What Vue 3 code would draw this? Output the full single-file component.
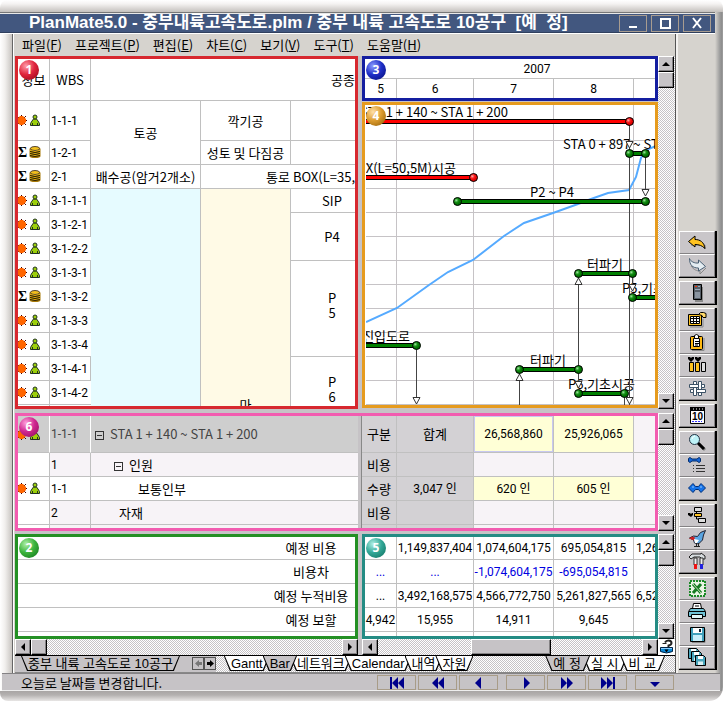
<script setup>
const menus = [
  ['파일', 'F'], ['프로젝트', 'P'], ['편집', 'E'], ['차트', 'C'],
  ['보기', 'V'], ['도구', 'T'], ['도움말', 'H'],
]

const person = '<path d="M15.500 5h3l1.500 2 1.500 2.500v2h-9v-2L14 7z" fill="#9ccf0a" stroke="#232"/><path d="M14.500 9v2M19.500 9v2" stroke="#232"/><circle cx="17" cy="3" r="2" fill="#9ccf0a" stroke="#232"/>'
const rowIcons = {
  work: '<path d="M-1 2 8 11M8 2-1 11M3.500 1v11M-3 6.500H9" stroke="#400"/><path d="M2 2h3l3 3v3l-3 3H2L-1 8V5z" fill="#f60"/>' + person,
  sum: '<text x="0" y="11" font-family="Liberation Serif, serif" font-size="14" font-weight="700">Σ</text><path d="M11.500 3q0-2 5.500-2t5.500 2v7q0 2-5.500 2t-5.500-2z" fill="#a87a08"/><ellipse cx="17" cy="2.500" rx="4.500" ry="2" fill="#f2c01c" stroke="#543"/><path d="M12 4.500q5 2 10 0M12 6.500q5 2 10 0M12 8.500q5 2 10 0" fill="none" stroke="#e8b818"/><path d="M12 5.500q5 2 10 0M12 7.500q5 2 10 0M12 9.500q5 2 10 0" fill="none" stroke="#2a2000"/>',
}

const wbsRows = [
  ['work', '1-1-1'], ['sum', '1-2-1'], ['sum', '2-1'],
  ['work', '3-1-1-1'], ['work', '3-1-2-1'], ['work', '3-1-2-2'],
  ['work', '3-1-3-1'], ['sum', '3-1-3-2'], ['work', '3-1-3-3'],
  ['work', '3-1-3-4'], ['work', '3-1-4-1'], ['work', '3-1-4-2'], ['work', '3-1-4-3'],
]
const pierCells = {
  3: { span: 1, lines: ['SIP'] },
  4: { span: 2, lines: ['P4'] },
  6: { span: 4, lines: ['P', '5'] },
  10: { span: 3, lines: ['P', '6'] },
}

const gridX = [30, 107, 187, 267]
const gridY = [35, 59, 83, 107, 131, 155, 179, 203, 227, 251, 275, 299]
const bars = [
  { x1: -10, x2: 263, y: 16, color: '#ff0000' },
  { x1: -10, x2: 107, y: 72, color: '#ff0000' },
  { x1: 91, x2: 279, y: 96, color: '#008000' },
  { x1: 263, x2: 279, y: 48, color: '#008000' },
  { x1: 212, x2: 266, y: 168, color: '#008000' },
  { x1: 266, x2: 400, y: 192, color: '#008000' },
  { x1: -10, x2: 50, y: 240, color: '#008000' },
  { x1: 153, x2: 212, y: 264, color: '#008000' },
  { x1: 212, x2: 258, y: 288, color: '#008000' },
]
const nodes = bars.flatMap((b) => [
  { x: b.x1, y: b.y, red: b.color === '#ff0000' },
  { x: b.x2, y: b.y, red: b.color === '#ff0000' },
])
const links = [
  [263, 16, 300], [279, 48, 90], [266, 168, 186], [50, 240, 299],
  [153, 264, 301], [212, 168, 264], [212, 264, 282], [258, 288, 301],
]
const downArrows = [[263, 43], [263, 299], [279, 91], [266, 186], [50, 299], [212, 283]]
const upArrows = [[212, 173], [153, 269]]
const labels = [
  { x: 142, y: 12, at: 'end', t: 'STA 1 + 140 ~ STA 1 + 200' },
  { x: 197, y: 44, at: 'start', t: 'STA 0 + 897 ~ STA 1 + 140' },
  { x: 90, y: 68, at: 'end', t: '통로 BOX(L=50,5M)시공' },
  { x: 186, y: 92, at: 'middle', t: 'P2 ~ P4' },
  { x: 239, y: 164, at: 'middle', t: '터파기' },
  { x: 256, y: 188, at: 'start', t: 'P5,기초시공' },
  { x: 44, y: 236, at: 'end', t: '진입도로' },
  { x: 182, y: 260, at: 'middle', t: '터파기' },
  { x: 202, y: 284, at: 'start', t: 'P6,기초시공' },
]

const costLabels = ['예정 비용', '비용차', '예정 누적비용', '예정 보할', '']
const costRows = [
  ['', '1,149,837,404', '1,074,604,175', '695,054,815', '1,263'],
  ['...', '...', '-1,074,604,175', '-695,054,815', ''],
  ['...', '3,492,168,575', '4,566,772,750', '5,261,827,565', '6,525'],
  ['4,942', '15,955', '14,911', '9,645', ''],
  ['', '', '', '', ''],
]

const viewTabs = ['Gantt', 'Bar', '네트워크', 'Calendar', '내역', '자원']
const planTabs = ['예 정', '실 시', '비 교']

const floppy = (x, y) => `<g transform="translate(${x} ${y})"><path d="M0.500.500h8l2 2v8H.500z" fill="#4aa6bd" stroke="#000"/><path d="M3 1h5v3H3z" fill="#fff"/><path d="M3 6.500h5V10H3z" fill="#d8f0f4"/></g>`
const tools = [
  [
    ['되돌리기', '<path d="M4 12h14v4" stroke="#888" fill="none"/><path d="M1.500 8.500 8 3v3.500c5 0 9 2.500 10 9-3-3-6-4-10-4V14z" fill="#ffc321" stroke="#000"/>'],
    ['다시하기', '<path d="M4 10c3 4 6 5 9 5v3l6-6" stroke="#888" fill="none"/><path d="M2.500 2.500c1 3 5 5 9 4.500V4l7 6.500-7 4.500v-3c-6 0-9-3-9-9.500z" fill="#e4edf2" stroke="#4a6074"/>'],
  ],
  [['계산기', '<path d="M8 18h7V4" stroke="#888" stroke-width="2" fill="none"/><path d="M6.500 1.500h8v15h-8z" fill="#555d66" stroke="#000"/><path d="M8 3h2v1H8z" fill="#f30"/><path d="M11 3h2v1h-2zM8 6h5v1H8z" fill="#9ab"/><path d="M8 9h5v6H8z" fill="#8a94a0"/>']],
  [
    ['달력표', '<path d="M3 17h13V9" fill="none" stroke="#888"/><path d="M1.500 4.500h13v11h-13z" fill="#ffc321" stroke="#000"/><path d="M3.500 6.500h9v7h-9z" fill="#fff" stroke="#000"/><path d="M6.500 6v8M9.500 6v8M4 8.500h9M4 11.500h9" stroke="#000"/><path d="M11.500 4.500l2-2h3l2.500 1v4h-3l-1-2z" fill="#ffd867" stroke="#000"/>'],
    ['클립보드', '<path d="M5 17.500h12V5" fill="none" stroke="#888"/><rect x="3.500" y="3.500" width="12" height="13" rx="1" fill="#ffb911" stroke="#000"/><path d="M6.500 5.500h6v8h-6z" fill="#fff" stroke="#000"/><path d="M8 8.500h4M8 10.500h4M8 12h3" stroke="#000"/><path d="M7.500 2.500l2-1 2 1v3h-4z" fill="#fff" stroke="#000"/>'],
    ['자원', '<path d="M1 1h2l1 1 1-1h2v2L4 6 1 3zM8 1h2l1 1 1-1h2v2l-3 3-3-3z" fill="#000"/><path d="M2.500 6.500h4v9h-4zM8.500 6.500h4v9h-4z" fill="#ffc321" stroke="#000"/><path d="M14.500 6.500h4v9h-4z" fill="#ddd" stroke="#000"/>'],
    ['연결망', '<g fill="#fff" stroke="#3c5266"><path d="M6.500 2.500h3v14h-3zM11.500 2.500h3v14h-3z"/><path d="M2.500 5.500h9v3h-9zM9.500 10.500h9v3h-9z"/><path d="M14.500 5.500h3v3h-3zM3.500 10.500h3v3h-3z"/></g>'],
  ],
  [['오늘', '<path d="M3.500 1.500h14v16h-14z" fill="#fff" stroke="#000"/><path d="M3 1h15v4H3z" fill="#000"/><path d="M6 3h1M9 3h1M12 3h1M15 3h1" stroke="#fff"/><text x="10.500" y="14" text-anchor="middle" font-family="Liberation Sans" font-size="10" font-weight="700">10</text><path d="M5 15.500h10" stroke="#33f" stroke-dasharray="2 1"/>']],
  [
    ['찾기', '<path d="M12 11l6 6" stroke="#888" stroke-width="3"/><path d="M11 10l6 6" stroke="#000" stroke-width="3"/><circle cx="7.500" cy="6.500" r="5" fill="#bdf2f7" stroke="#234"/><path d="M5 6q1-3 3-3" stroke="#fff" fill="none"/>'],
    ['작업 목록', '<path d="M1.500 2.500l1.500-1 2 1.500h5l2-1.500 1.500 1v3L12 6.500 10 5H5L3 6.500 1.500 5.500z" fill="#1667d8" stroke="#002a6b"/><path d="M6 9.500h1M9 9.500h9M6 12.500h1M9 12.500h9M6 15.500h1M9 15.500h9" stroke="#333"/>'],
    ['관계', '<path d="M1.500 9 6 4.500 8.500 7.500h3L14 4.500 18.500 9 14 13.500 11.500 10.500h-3L6 13.500z" fill="#1673e8" stroke="#002f7a"/><path d="M5 8h2M13 8h2" stroke="#9cf"/>'],
  ],
  [
    ['조직도', '<path d="M9.500 4v9h4M9 8h1" stroke="#000" fill="none"/><path d="M7.500 1.500h7v4h-7z" fill="#ddd" stroke="#000"/><path d="M7.500 7.500h7v3h-7z" fill="#ffc321" stroke="#000"/><path d="M11.500 12.500h7v4h-7z" fill="#ddd" stroke="#000"/><path d="M1 7h2l1 1 1-1h1v2l-2 2-3-2z"/>'],
    ['새 작업', '<path d="M18.500 1.500l-5 2-3 4-4-.5-4 2 4 2 1 3 4 1 4-4 1-5z" fill="#5aa5e2" stroke="#223"/><path d="M2 9.500l3-2 3 1-1 3z" fill="#c22"/><path d="M7 10l5 1-2 3H8z" fill="#fff"/><path d="M9.500 14v3M11.500 14v3M7 17.500h6" stroke="#222"/>'],
    ['도구', '<path d="M2 5l3-3h9v-1l4 3v3h-3l-2-2H7L4 7z" fill="#d8dde0" stroke="#222"/><path d="M7 6h3v7H7zM13 6h3v7h-3z" fill="#eee" stroke="#333"/><path d="M7 12h3v5H7z" fill="#e11"/><path d="M13 12h3v5h-3z" fill="#22d"/>'],
  ],
  [
    ['엑셀', '<path d="M3 2h15v15H3z" fill="#e9f5e4" stroke="#1a8a26" stroke-width="2" stroke-dasharray="2 1"/><path d="M6 5l8 9M14 5l-8 9" stroke="#167a22" stroke-width="3"/><path d="M6 5l8 9" stroke="#bfe3b4"/>'],
    ['인쇄', '<path d="M6.500 1.500h7l1 5h-9z" fill="#fff" stroke="#000"/><path d="M8 4h4" stroke="#000"/><path d="M3.500 6.500h13l2 3v5h-17v-5z" fill="#6fc3d6" stroke="#000"/><path d="M2 9.500h16" stroke="#000"/><path d="M4.500 12.500h11v4h-11z" fill="#dff6f8" stroke="#000"/>'],
    ['저장', '<path d="M5 17.500h13V4" fill="none" stroke="#888"/><path d="M3.500 2.500h14v14h-14z" fill="#41a0bb" stroke="#000"/><path d="M6 3h9v5H6z" fill="#fff"/><path d="M12 4h2v3h-2z" fill="#123"/><path d="M6 10h9v6H6z" fill="#c9effa"/>'],
    ['모두 저장', floppy(1, 0) + floppy(4, 3) + floppy(8, 7)],
  ],
]

const navGroups = [
  [
    ['처음', '<path d="M3 1h2v12H3zM11 1v12L5 7zM17 1v12l-6-6z"/>'],
    ['이전 쪽', '<path d="M10 1v12L4 7zM16 1v12l-6-6z"/>'],
    ['이전', '<path d="M12 1v12L6 7z"/>'],
  ],
  [
    ['다음', '<path d="M8 1v12l6-6z"/>'],
    ['다음 쪽', '<path d="M4 1v12l6-6zM10 1v12l6-6z"/>'],
    ['마지막', '<path d="M3 1v12l6-6zM9 1v12l6-6zM15 1h2v12h-2z"/>'],
  ],
  [['메뉴', '<path d="M5 6h10l-5 5z"/>']],
]
</script>

<template>
  <div class="window">
    <header class="titlebar">
      <h1>PlanMate5.0 - 중부내륙고속도로.plm / 중부 내륙 고속도로 10공구&nbsp; [예&nbsp; 정]</h1>
      <div class="winbtns">
        <button type="button" aria-label="최소화"><svg width="14" height="14"><path d="M3 10h8v2H3z" fill="#fff" /></svg></button>
        <button type="button" aria-label="최대화"><svg width="14" height="14"><path d="M3 3h9v9H3z" fill="none" stroke="#fff" stroke-width="2" /></svg></button>
        <button type="button" aria-label="닫기"><svg width="14" height="14"><path d="M3 2l8 10M11 2 3 12" stroke="#fff" stroke-width="2" /></svg></button>
      </div>
    </header>

    <div class="middle">
      <main class="client">
        <nav class="menubar">
          <button v-for="m in menus" :key="m[1]" type="button">{{ m[0] }}(<u>{{ m[1] }}</u>)</button>
        </nav>

        <div class="workspace">
          <section class="pane red wbs">
            <span class="badge b-red">1</span>
            <table>
              <colgroup><col class="c-info"><col class="c-wbs"><col class="c-kind"><col class="c-sub"><col></colgroup>
              <thead>
                <tr class="r-head"><th>정보</th><th>WBS</th><th colspan="3" class="right">공종</th></tr>
              </thead>
              <tbody>
                <tr v-for="(r, i) in wbsRows" :key="r[1]" :class="{ tall: i === 0 }">
                  <td class="ico"><svg width="24" height="13" v-html="rowIcons[r[0]]"></svg></td>
                  <td class="code">{{ r[1] }}</td>
                  <td v-if="i === 0" rowspan="2">토공</td>
                  <td v-if="i === 0">깍기공</td>
                  <td v-if="i === 0"></td>
                  <td v-if="i === 1">성토 및 다짐공</td>
                  <td v-if="i === 1"></td>
                  <td v-if="i === 2">배수공(암거2개소)</td>
                  <td v-if="i === 2" colspan="2" class="right">통로 BOX(L=35,</td>
                  <td v-if="i === 3" rowspan="10" class="blue"></td>
                  <td v-if="i === 3" rowspan="10" class="cream">마</td>
                  <td v-if="pierCells[i]" :rowspan="pierCells[i].span" class="pier" :class="{ stacked: pierCells[i].lines.length > 1 }">
                    <div v-for="l in pierCells[i].lines" :key="l">{{ l }}</div>
                  </td>
                </tr>
              </tbody>
            </table>
          </section>

          <div class="chartcol">
            <section class="pane navy calendar">
              <span class="badge b-navy">3</span>
              <table>
                <colgroup><col class="c-a"><col class="c-b"><col class="c-c"><col class="c-c"><col></colgroup>
                <tbody>
                  <tr><th colspan="5" class="year">2007</th></tr>
                  <tr><th>5</th><th>6</th><th>7</th><th>8</th><th></th></tr>
                </tbody>
              </table>
            </section>
            <section class="pane orange chart">
              <span class="badge b-orange">4</span>
              <svg class="plot" width="100%" height="100%">
                <defs>
                  <radialGradient id="ball-red" cx="35%" cy="35%"><stop offset="0" stop-color="#ffb0b0" /><stop offset=".5" stop-color="#ff2020" /><stop offset="1" stop-color="#e00000" /></radialGradient>
                  <radialGradient id="ball-green" cx="35%" cy="35%"><stop offset="0" stop-color="#a0e8a0" /><stop offset=".5" stop-color="#189018" /><stop offset="1" stop-color="#007000" /></radialGradient>
                </defs>
                <g fill="#c6c3c6">
                  <rect v-for="x in gridX" :key="'x' + x" :x="x" y="0" width="1" height="100%" />
                  <rect v-for="y in gridY" :key="'y' + y" x="0" :y="y" width="100%" height="1" />
                </g>
                <polyline points="0,217 31,203 63,180 82,167 107,155 138,131 158,118 187,108 212,99 225,94 242,88 263,85 270,72 275,53 280,45 290,41" fill="none" stroke="#55aaff" stroke-width="2" />
                <text v-for="(l, i) in labels" :key="i" :x="l.x" :y="l.y" :text-anchor="l.at">{{ l.t }}</text>
                <g stroke="#444" fill="none">
                  <path v-for="(l, i) in links" :key="i" :d="`M${l[0] + 0.5} ${l[1]}V${l[2]}`" />
                </g>
                <g v-for="(b, i) in bars" :key="i">
                  <rect :x="b.x1" :y="b.y - 2" :width="b.x2 - b.x1" height="5" />
                  <rect :x="b.x1" :y="b.y - 1" :width="b.x2 - b.x1" height="3" :fill="b.color" />
                </g>
                <circle v-for="(n, i) in nodes" :key="i" :cx="n.x + 0.5" :cy="n.y + 0.5" r="4" :fill="n.red ? 'url(#ball-red)' : 'url(#ball-green)'" stroke="#000" />
                <g stroke="#333" fill="#fff">
                  <path v-for="(a, i) in downArrows" :key="'d' + i" :d="`M${a[0] - 3} ${a[1] - 6.5}h7l-3.500 6.500z`" />
                  <path v-for="(a, i) in upArrows" :key="'u' + i" :d="`M${a[0] - 3} ${a[1] + 6.5}h7l-3.500-6.500z`" />
                </g>
              </svg>
            </section>
          </div>
          <div class="vscroll">
            <button type="button" aria-label="위로"><i class="up"></i></button><span class="thumb"></span><button type="button" class="last" aria-label="아래로"><i class="down"></i></button>
          </div>

          <section class="pane pink detail">
            <span class="badge b-pink">6</span>
            <table class="d-left">
              <colgroup><col class="c-info"><col class="c-wbs"><col></colgroup>
              <tbody>
                <tr class="sel">
                  <td class="ico"><svg width="24" height="13" v-html="rowIcons.work"></svg></td><td class="code">1-1-1</td>
                  <td class="name n1"><span class="box"></span>STA 1 + 140 ~ STA 1 + 200</td>
                </tr>
                <tr><td></td><td class="code tint">1</td><td class="name n2 tint"><span class="box"></span>인원</td></tr>
                <tr>
                  <td class="ico"><svg width="24" height="13" v-html="rowIcons.work"></svg></td><td class="code">1-1</td>
                  <td class="name n3">보통인부</td>
                </tr>
                <tr><td></td><td class="code tint">2</td><td class="name n4 tint">자재</td></tr>
                <tr><td></td><td class="tint"></td><td class="tint"></td></tr>
              </tbody>
            </table>
            <div class="d-split"></div>
            <table class="d-right">
              <colgroup><col class="c-d"><col class="c-b"><col class="c-c"><col class="c-c"><col></colgroup>
              <tbody>
                <tr class="first"><th>구분</th><th>합계</th><td class="val cur">26,568,860</td><td class="val">25,926,065</td><td class="tint"></td></tr>
                <tr><th>비용</th><th></th><td class="tint"></td><td class="tint"></td><td class="tint"></td></tr>
                <tr><th>수량</th><th class="num">3,047 인</th><td class="val">620 인</td><td class="val">605 인</td><td></td></tr>
                <tr><th>비용</th><th></th><td class="tint"></td><td class="tint"></td><td class="tint"></td></tr>
                <tr><th></th><th></th><td class="tint"></td><td class="tint"></td><td class="tint"></td></tr>
              </tbody>
            </table>
          </section>
          <div class="vscroll">
            <button type="button" aria-label="위로"><i class="up"></i></button><span class="thumb"></span><button type="button" class="last" aria-label="아래로"><i class="down"></i></button>
          </div>

          <section class="pane green costs">
            <span class="badge b-green">2</span>
            <table>
              <tbody>
                <tr v-for="(c, i) in costLabels" :key="i"><th>{{ c }}</th></tr>
              </tbody>
            </table>
          </section>
          <section class="pane teal values">
            <span class="badge b-teal">5</span>
            <table>
              <colgroup><col class="c-a"><col class="c-b"><col class="c-c"><col class="c-c"><col></colgroup>
              <tbody>
                <tr v-for="(r, i) in costRows" :key="i" :class="{ minus: i === 1 }"><td v-for="(v, j) in r" :key="j"><div>{{ v }}</div></td></tr>
              </tbody>
            </table>
          </section>
          <div class="vscroll">
            <button type="button" aria-label="위로"><i class="up"></i></button><span class="thumb"></span><button type="button" class="last" aria-label="아래로"><i class="down"></i></button>
          </div>

          <div class="hscroll">
            <button type="button" aria-label="왼쪽"><i class="lt"></i></button><span class="thumb"></span><button type="button" class="last" aria-label="오른쪽"><i class="rt"></i></button>
          </div>
          <div class="hscroll wide">
            <button type="button" aria-label="왼쪽"><i class="lt"></i></button><span class="thumb"></span><button type="button" class="last" aria-label="오른쪽"><i class="rt"></i></button>
          </div>
          <button type="button" class="lock" aria-label="잠금">
            <svg width="15" height="16"><path d="M6 3.500q1-2 3.500-2 3 0 3 2.500 0 2-3 2.500V9" fill="none" stroke="#222" stroke-width="2" /><path d="M3.500 4.500h4" stroke="#222" /><path d="M1.500 8.500h12v4q-6 3-12 0z" fill="#0a8ad8" stroke="#024" /><path d="M2 9h11v1H2z" fill="#8cf" /><path d="M5.500 10.500h4l-2 3z" /></svg>
          </button>
        </div>

        <div class="tabs">
          <div class="strip plain">
            <button type="button" class="tab on project"><span>중부 내륙 고속도로 10공구</span></button>
            <div class="steps">
              <button type="button" aria-label="이전 탭"><svg width="11" height="11"><path d="M2 5.500 6 2v2h3v3H6v2z" fill="#777" /></svg></button>
              <button type="button" aria-label="다음 탭"><svg width="11" height="11"><path d="M9 5.500 5 2v2H2v3h3v2z" /></svg></button>
            </div>
          </div>
          <div class="strip dither">
            <div class="tabset"><button v-for="t in viewTabs" :key="t" type="button" class="tab" :class="{ on: t === 'Bar' }"><span>{{ t }}</span></button></div>
            <div class="tabset end"><button v-for="(t, i) in planTabs" :key="t" type="button" class="tab" :class="{ on: i === 0 }"><span>{{ t }}</span></button></div>
          </div>
        </div>
      </main>

      <aside class="toolbar">
        <div v-for="(g, i) in tools" :key="i" class="group">
          <button v-for="t in g" :key="t[0]" type="button" :aria-label="t[0]"><svg width="20" height="19" v-html="t[1]"></svg></button>
        </div>
      </aside>
    </div>

    <footer class="status">
      <p>오늘로 날짜를 변경합니다.</p>
      <div class="nav">
        <div v-for="(g, i) in navGroups" :key="i" class="navgroup">
          <button v-for="n in g" :key="n[0]" type="button" :aria-label="n[0]"><svg width="20" height="14" fill="#00008b" v-html="n[1]"></svg></button>
        </div>
      </div>
    </footer>
  </div>
</template>

<style>
body { background: #fff; }
</style>

<style scoped>
* { box-sizing: border-box; }
.window {
  height: 100vh; min-height: 600px; min-width: 600px;
  padding: 12px 0 10px;
  display: flex; flex-direction: column; overflow: hidden;
  border-radius: 8px 8px 14px 8px;
  background:
    linear-gradient(#fff, #f4f2f1 4px, #c4c0bd) top / 100% 12px no-repeat,
    linear-gradient(#a8a5a4, #b4b1b0 4px, #e8e6e5) bottom / 100% 10px no-repeat,
    linear-gradient(to right, #fff, #f1efed 5px, #c2beba) left / 13px 100% no-repeat,
    linear-gradient(to right, #d6d3ce, #9a9a9a 5px, #8c8c8c 7px, #a8a8a8) right / 8px 100% no-repeat,
    #d6d3ce;
  font: 13px/16px "Noto Sans CJK KR", sans-serif;
  color: #000;
}
button { font: inherit; color: inherit; padding: 0; margin: 0; border: 0; background: none; }
svg { display: block; }
table { border-collapse: separate; border-spacing: 0; table-layout: fixed; width: 100%; }
th, td { padding: 0; font-weight: 400; text-align: center; white-space: nowrap; overflow: hidden; border-right: 1px solid #c0c0c0; border-bottom: 1px solid #c0c0c0; }
tr > :last-child { border-right: 0; }

.titlebar {
  display: flex; align-items: center; justify-content: space-between; height: 22px; flex: none;
  margin-right: 8px; padding: 0 4px 0 29px;
  border-top: 1px solid #777; border-bottom: 1px solid #fff;
  background: #42577f; box-shadow: inset 0 1px #e8e8e8, inset 0 -1px #30405e; color: #fff;
}
h1 { margin: 0; font: 700 17px/20px "Liberation Sans", "Noto Sans CJK KR", sans-serif; white-space: nowrap; }
.winbtns { display: flex; gap: 4px; }
.winbtns button { width: 28px; height: 17px; border: 1px solid #a89c90; display: grid; place-items: center; }

.middle { flex: 1; display: flex; min-height: 0; padding-left: 12px; }
.client { flex: 1; min-width: 0; display: flex; flex-direction: column; border-left: 1px solid #666; border-right: 1px solid #555; box-shadow: inset 1px 0 #fff; padding-left: 2px; background: #d6d3ce; }
.menubar { display: flex; gap: 13px; height: 22px; padding-left: 7px; align-items: center; flex: none; }
.workspace {
  flex: 1; min-height: 0; display: grid; background: #c6c3c6;
  grid-template-columns: minmax(0, 343fr) minmax(0, 296fr) 13px;
  grid-template-rows: minmax(0, 353fr) minmax(0, 122fr) minmax(0, 108fr) 16px;
  column-gap: 4px;
}
.workspace > .vscroll, .workspace > .lock { margin-left: -4px; }
.wbs { grid-column: 1; }
.detail { grid-column: 1 / 3; margin-top: 4px; }
.detail + .vscroll { margin-top: 4px; }
.costs, .values, .values + .vscroll { margin-top: 3px; }

.pane { position: relative; overflow: hidden; border: 3px solid; background: #fff; }
.red { border-color: #d7282f; }
.navy { border-color: #141ea0; }
.orange { border-color: #e69b1e; }
.pink { border-color: #f25cb0; }
.green { border-color: #249024; }
.teal { border-color: #248c84; }
.badge {
  position: absolute; left: 1px; top: 1px; z-index: 2; width: 20px; height: 20px; border-radius: 50%;
  color: #fff; font: 700 12px/20px "Open Sans", sans-serif; text-align: center;
}
.b-red { background: radial-gradient(circle at 35% 30%, #ff9ca8, #e0243c 45%, #8c0010); }
.b-navy { background: radial-gradient(circle at 35% 30%, #8c9cff, #2030c8 45%, #000870); }
.b-orange { background: radial-gradient(circle at 35% 30%, #ffe0a8, #dc9c30 45%, #8c5800); }
.b-pink { background: radial-gradient(circle at 35% 30%, #ffa0dc, #d02890 45%, #880858); }
.b-green { background: radial-gradient(circle at 35% 30%, #b0f0a8, #3cb43c 45%, #0c6c14); }
.b-teal { background: radial-gradient(circle at 35% 30%, #b0f0e4, #34a898 45%, #086858); }

.c-info { width: 32px; }
.c-wbs { width: 41px; }
.c-kind { width: 110px; }
.c-sub { width: 90px; }
.c-a { width: 32px; }
.c-b { width: 77px; }
.c-c { width: 80px; }
.c-d { width: 35px; }
.wbs tr { height: 24px; }
.wbs .r-head { height: 42px; }
.wbs .tall { height: 40px; }
.right { text-align: right; }
.code, .val, .num, .values td, .calendar th { font-family: Roboto, "Noto Sans CJK KR", sans-serif; font-size: 12px; }
.code { text-align: left; padding-left: 1px; }
.blue { background: #e6fbff; }
.cream { background: #fffae6; vertical-align: bottom; padding-bottom: 15px; }
.pier { padding-left: 18px; line-height: 15px; }
.stacked { padding-bottom: 8px; }

.chartcol { display: flex; flex-direction: column; gap: 1px; min-height: 0; }
.calendar { flex: none; }
.calendar tr { height: 20px; }
.calendar tr + tr { height: 19px; }
.calendar tr + tr th { border-bottom: 0; }
.year { padding-left: 54px; }
.chart { flex: 1; min-height: 0; margin-bottom: 1px; padding-left: 1px; }
.plot { font-size: 13px; }

.detail { display: flex; }
.detail .d-left { flex: 340; width: 0; }
.detail .d-right { flex: 293; width: 0; }
.d-split { width: 4px; background: #c6c3c6; border-right: 1px solid #888; }
.detail table { height: max-content; }
.detail tr { height: 24px; }
.detail tr:first-child { height: 37px; }
.sel td { background: #cecece; color: #444; border-right-color: #fff; }
.tint { background: #f7f3f7; }
.name { text-align: left; }
.n1 { padding-left: 4px; }
.n2 { padding-left: 23px; }
.n3 { padding-left: 47px; }
.n4 { padding-left: 28px; }
.box { display: inline-block; width: 9px; height: 9px; margin-right: 6px; border: 1px solid #333; background: linear-gradient(#333, #333) center / 5px 1px no-repeat; vertical-align: -1px; }
.d-right th { background: #d3d1d4; }
.val { background: #ffffd6; }
.cur { box-shadow: inset 0 0 0 1px #c8c8f0; }

.costs tr, .values tr { height: 24px; }
.costs tr:first-child, .values tr:first-child { height: 23px; }
.costs th { padding-left: 249px; }
.values td div { display: flex; justify-content: center; }
.values td:last-child div { justify-content: flex-start; padding-left: 2px; }
.values .minus { color: #0000e0; }

.vscroll, .hscroll, .dither { background: repeating-conic-gradient(#fff 0 25%, #c6c3c6 0 50%) 0 0 / 2px 2px; }
.vscroll { display: flex; flex-direction: column; padding-right: 1px; }
.hscroll { display: flex; }
.vscroll > *, .hscroll > * {
  flex: none; width: 16px; height: 16px; display: grid; place-items: center; background: #c6c3c6;
  border: 1px solid; border-color: #fff #000 #000 #fff; box-shadow: inset -1px -1px #848284;
}
.wide .thumb { width: 80px; margin-left: 93px; }
.vscroll .last { margin-top: auto; }
.hscroll .last { margin-left: auto; }
.vscroll i, .hscroll i { border: 4px solid transparent; }
.vscroll .up { border-bottom-color: #000; border-top: 0; }
.vscroll .down { border-top-color: #000; border-bottom: 0; }
.hscroll .lt { border-right-color: #000; border-left: 0; }
.hscroll .rt { border-left-color: #000; border-right: 0; }
.lock { display: grid; place-items: center; background: #fff; }

.tabs { display: flex; height: 18px; flex: none; border-bottom: 1px solid #888; background: #c6c3c6; }
.strip { display: flex; border-top: 1px solid #000; }
.plain { flex: 203; padding-left: 6px; gap: 12px; align-items: flex-start; }
.dither { flex: 457; min-width: 0; justify-content: space-between; padding: 0 17px 0 8px; }
.tabset { display: flex; }
.tab { position: relative; height: 15px; margin-right: -7px; padding: 0 7px; background: #000; clip-path: polygon(0 0, 100% 0, calc(100% - 6px) 100%, 6px 100%); font: 13px/14px "Liberation Sans", "Noto Sans CJK KR", sans-serif; white-space: nowrap; }
.tab::before { content: ""; position: absolute; inset: 0 1px 1px; background: #fff; clip-path: polygon(0 0, 100% 0, calc(100% - 6px) 100%, 6px 100%); }
.end .tab { padding: 0 9px 0 8px; }
.tab.on::before { background: #c6c3c6; }
.tab.on { z-index: 1; }
.tab.project { margin-right: 0; }
.tab span { position: relative; }
.steps { display: flex; padding: 1px 0 0 0; }
.steps button { width: 12px; height: 13px; border: 1px solid #555; display: grid; place-items: center; }

.toolbar { flex: none; width: 47px; border-left: 2px solid #f4f2f0; padding: 0 6px 3px 1px; display: flex; flex-direction: column; justify-content: flex-end; gap: 3px; }
.group { border-right: 2px solid #000; border-bottom: 1px solid #000; }
.group button { display: grid; place-items: center; width: 100%; height: 23px; background: #c9c6c9; border: 1px solid; border-color: #fff #848284 #848284 #fff; }

.status { flex: none; height: 18px; margin: 0 3px 0 2px; padding: 1px 46px 0 19px; display: flex; justify-content: space-between; align-items: center; background: #c6c3c6; border-top: 1px solid #848284; border-bottom: 1px solid #eee; }
.status p { margin: 0; }
.nav { display: flex; gap: 8px; }
.navgroup { display: flex; gap: 2px; }
.navgroup button { width: 39px; height: 15px; border: 1px solid #a89c88; display: grid; place-items: center; }
</style>
